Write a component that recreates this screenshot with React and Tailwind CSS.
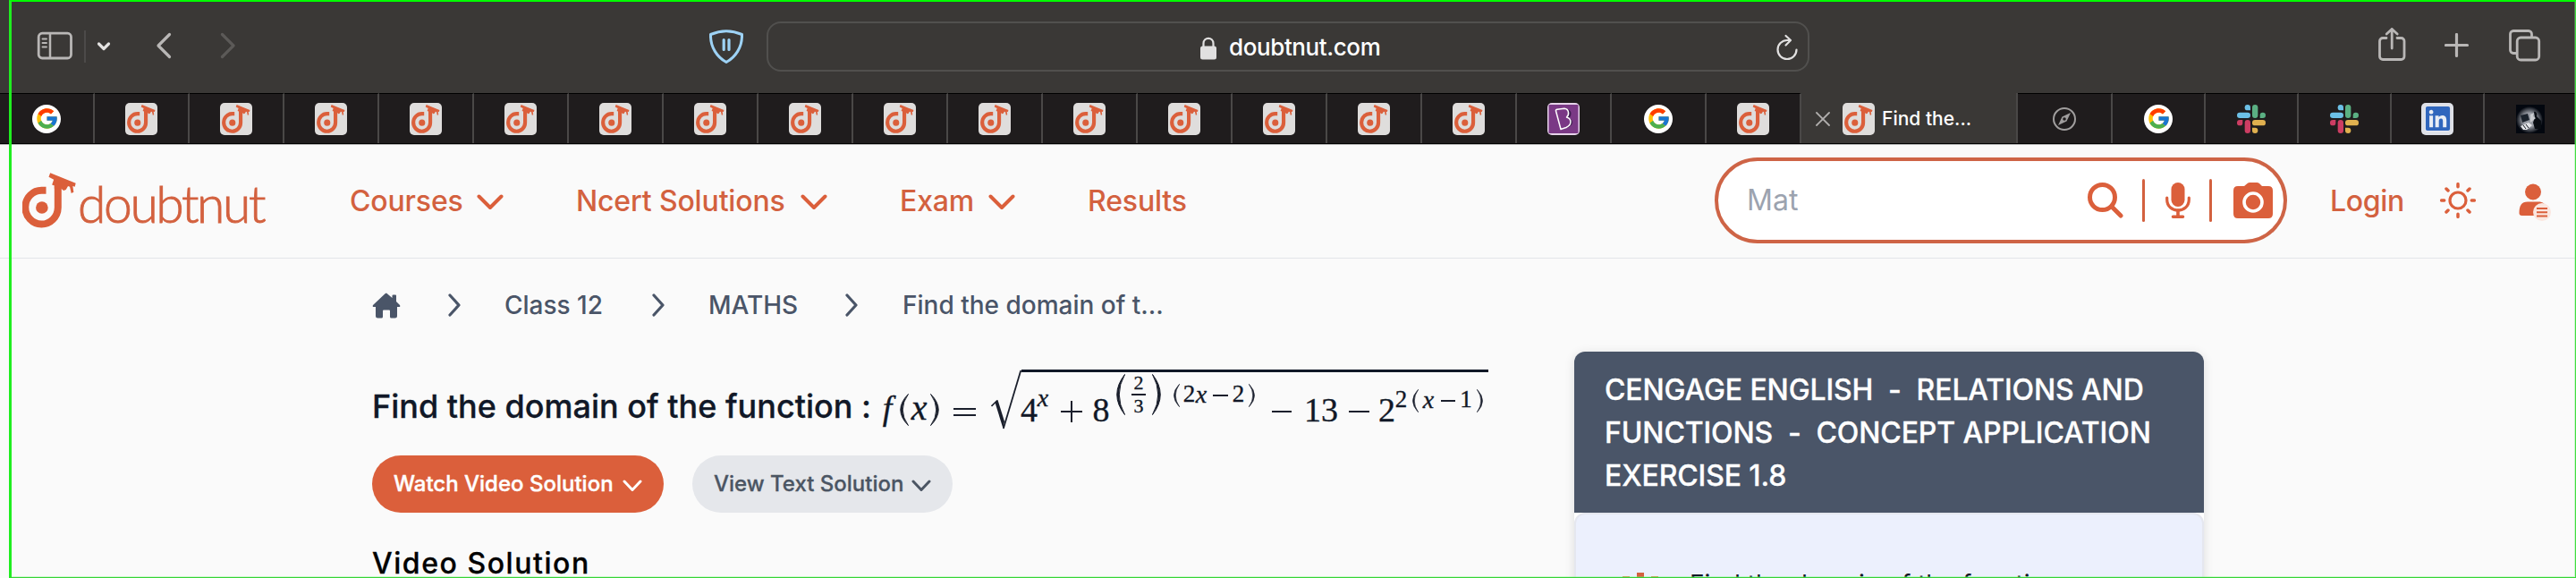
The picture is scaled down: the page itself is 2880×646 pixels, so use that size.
import React from "react";
import { FcGoogle } from "react-icons/fc";
import { FaLinkedin } from "react-icons/fa";

const ORANGE = "#db5f3b";

function NutMark({ className }) {
  return (
    <svg viewBox="75 577 181 186" className={className} fill="none">
      <path d="M155 636H141A55 57 0 1 0 195 694V622" stroke={ORANGE} strokeWidth="24" />
      <circle cx="141" cy="694" r="20.5" fill={ORANGE} />
      <path
        d="M169 577L255 612L252 624L245 622L248 642L240 646L235 624L229 622L222 634L214 637L206 630H183V620L175 617L181 600L164 591Z"
        fill={ORANGE}
      />
    </svg>
  );
}

function NutFavicon() {
  return (
    <span className="flex h-9 w-9 shrink-0 items-center justify-center rounded-[5px] bg-[#dfdddc]">
      <NutMark className="h-8 w-8" />
    </span>
  );
}

function GoogleFavicon() {
  return (
    <span className="flex h-8 w-8 items-center justify-center rounded-full bg-white">
      <FcGoogle className="h-[27px] w-[27px]" />
    </span>
  );
}

function SlackFavicon() {
  return (
    <svg viewBox="0 0 96 96" className="h-8 w-8">
      <g fill="#6cc0e6">
        <rect y="26" width="45" height="19" rx="9.5" />
        <path d="M45 19H35.500A9.500 9.500 0 1 1 45 9.500Z" />
      </g>
      <g fill="#5bb083">
        <rect x="51" width="19" height="45" rx="9.500" />
        <path d="M77 45V35.500A9.500 9.500 0 1 1 86.500 45Z" />
      </g>
      <g fill="#e0b04f">
        <rect x="51" y="51" width="45" height="19" rx="9.500" />
        <path d="M51 77H60.500A9.500 9.500 0 1 1 51 86.500Z" />
      </g>
      <g fill="#cd3d63">
        <rect x="26" y="51" width="19" height="45" rx="9.500" />
        <path d="M19 51V60.500A9.500 9.500 0 1 1 9.500 51Z" />
      </g>
    </svg>
  );
}

function PurpleFavicon() {
  return (
    <svg viewBox="0 0 36 36" className="h-9 w-9">
      <rect width="36" height="36" rx="5" fill="#e6d3ea" />
      <rect x="1.500" y="2" width="33" height="32" rx="1" fill="#7a3985" />
      <path d="M13 9L23 7C28 9 27 15 24 17C31 20 28 27 21 28L16 30Z" fill="#3c1d4e" />
      <path
        d="M9.500 9C9 8 10 7.500 11 7.200L19 6.200C24 6.500 25 13 21.500 16C28 18 27 25 21 27.500L15 29.500Z"
        fill="#7a3985"
        stroke="#fff"
        strokeWidth="1.500"
        strokeLinejoin="round"
      />
    </svg>
  );
}

function LinkedinFavicon() {
  return (
    <span className="flex h-9 w-9 items-center justify-center rounded-[5px] bg-[#dfe1e8]">
      <span className="flex h-7 w-7 items-center justify-center rounded-[3px] bg-[#e9edf5]">
        <FaLinkedin className="h-[31px] w-[31px] shrink-0 text-[#3066bd]" />
      </span>
    </span>
  );
}

function CompassFavicon() {
  return (
    <svg viewBox="0 0 26 26" className="h-[26px] w-[26px]" fill="none">
      <circle cx="13" cy="13" r="12" stroke="#a09e9e" strokeWidth="2" />
      <path d="M20 6L15.500 15.500L6 20L10.500 10.500Z" fill="#a09e9e" />
      <circle cx="13" cy="13" r="1.800" fill="#1f1c1d" />
    </svg>
  );
}

function PhotoFavicon() {
  return (
    <svg viewBox="0 0 32 32" className="h-8 w-8">
      <defs>
        <radialGradient id="glow">
          <stop offset="0.500" stopColor="#9a9ea6" />
          <stop offset="1" stopColor="#03070f" />
        </radialGradient>
      </defs>
      <rect width="32" height="32" fill="#03070f" />
      <ellipse cx="15" cy="17" rx="15" ry="15" fill="url(#glow)" />
      <path d="M5 12L13 10L15 17L7 20Z" fill="#1a222c" />
      <path d="M20 8C22 7 24 10 23 13L28 18V27H21L19 20L21 14Z" fill="#080c12" />
      <path d="M16 11L20 9L19 13L22 15L16 20Z" fill="#c9cbcf" />
      <path d="M5 24L14 20L18 23L12 28L8 28Z" fill="#e3e5e8" />
      <path d="M8 23L11 27M11 22L14 26" stroke="#11161d" />
    </svg>
  );
}

const favicons = {
  google: GoogleFavicon,
  nut: NutFavicon,
  slack: SlackFavicon,
  purple: PurpleFavicon,
  linkedin: LinkedinFavicon,
  compass: CompassFavicon,
  photo: PhotoFavicon,
};

const leftTabs = ["google", ...Array(15).fill("nut"), "purple", "google", "nut"];

function Tab({ kind, width, last }) {
  const Icon = favicons[kind];
  return (
    <div
      className={`flex h-full shrink-0 items-center justify-center border-t border-t-black bg-[#1f1c1d] ${width} ${
        last ? "" : "border-r-2 border-r-[#4a4847]"
      }`}
    >
      <Icon />
    </div>
  );
}

function Toolbar() {
  return (
    <div className="flex h-[104px] items-start bg-[#3a3836]">
      <svg viewBox="0 0 40 32" className="ml-[41px] mt-[35px] h-8 w-10 shrink-0" fill="none" stroke="#b9b7b6">
        <rect x="2.200" y="2.200" width="36.300" height="27.800" rx="4" strokeWidth="2.800" />
        <path d="M15 2V30" strokeWidth="2.500" />
        <path d="M6.500 8.500H11M6.500 13H11M6.500 17.500H11" strokeWidth="1.900" strokeLinecap="round" />
      </svg>
      <span className="ml-[13px] mt-[34px] h-9 w-0.5 bg-[#4c4a49]" />
      <svg viewBox="0 0 16 12" className="ml-3 mt-[46px] h-3 w-4" fill="none">
        <path d="M2.500 3L8 8.500L13.500 3" stroke="#e4e3e2" strokeWidth="3.200" strokeLinecap="round" strokeLinejoin="round" />
      </svg>
      <svg viewBox="0 0 18 30" className="ml-[50px] mt-9 h-[30px] w-[18px]" fill="none">
        <path d="M15.500 2.500L3 15L15.500 27.500" stroke="#b9b7b6" strokeWidth="3.200" strokeLinecap="round" strokeLinejoin="round" />
      </svg>
      <svg viewBox="0 0 18 30" className="ml-[54px] mt-9 h-[30px] w-[18px]" fill="none">
        <path d="M2.500 2.500L15 15L2.500 27.500" stroke="#5c5a58" strokeWidth="3.200" strokeLinecap="round" strokeLinejoin="round" />
      </svg>
      <svg viewBox="0 0 38 38" className="ml-[529px] mt-[33px] h-[38px] w-[38px]" fill="none" stroke="#9dd2f5">
        <path d="M1.500 5.500Q19 -2 36.500 5.500C37 20 29 31 19 36.500C9 31 1 20 1.500 5.500Z" strokeWidth="3" strokeLinejoin="round" />
        <path d="M16.200 11.500V22.500M22 11.500V22.500" strokeWidth="3.200" strokeLinecap="round" />
      </svg>
      <div className="ml-[26px] mt-6 flex h-14 w-[1166px] items-start rounded-2xl border-2 border-[#51504e] text-[#e1e0e0]">
        <svg viewBox="0 0 18 26" className="ml-[483px] mt-[15px] h-[26px] w-[18px]" fill="none">
          <rect y="10.500" width="18" height="15" rx="2.500" fill="#e1e0e0" />
          <path d="M3.500 12V7.500C3.500 0 14.500 0 14.500 7.500V12" stroke="#e1e0e0" strokeWidth="2.200" />
        </svg>
        <span className="ml-[14px] mt-[10px] w-[181px] text-[26px] leading-[34px] font-medium tracking-[-0.4px] whitespace-nowrap text-white">
          doubtnut.com
        </span>
        <svg viewBox="0 0 26 30" className="ml-[430px] mt-3 h-[30px] w-[26px]" fill="none" stroke="#e1e0e0" strokeWidth="2.200" strokeLinecap="round" strokeLinejoin="round">
          <path d="M15.500 7H13A10.500 10.500 0 1 0 23.500 17.500" />
          <path d="M11.500 2L17 7L11.500 12.500" />
        </svg>
      </div>
      <svg viewBox="0 0 32 40" className="ml-[635px] mt-[30px] h-10 w-8" fill="none" stroke="#b9b7b6" strokeWidth="2.800" strokeLinecap="round" strokeLinejoin="round">
        <path d="M10 12.500H6A3.500 3.500 0 0 0 2.500 16V33A3.500 3.500 0 0 0 6 36.500H26.500A3.500 3.500 0 0 0 30 33V16A3.500 3.500 0 0 0 26.500 12.500H22" />
        <path d="M16.200 24V2.500M10.200 8L16.200 2.500L22.200 8" />
      </svg>
      <svg viewBox="0 0 28 28" className="ml-[43px] mt-[37px] h-7 w-7" fill="none">
        <path d="M13.500 1.500V25.500M1.500 13.500H25.500" stroke="#b9b7b6" strokeWidth="3.200" strokeLinecap="round" />
      </svg>
      <svg viewBox="0 0 36 36" className="ml-11 mt-[33px] h-9 w-9" fill="none" stroke="#b9b7b6" strokeWidth="2.800">
        <path d="M9 26.500H5A3.600 3.600 0 0 1 1.500 23V5A3.600 3.600 0 0 1 5 1.500H22A3.600 3.600 0 0 1 25.500 5V9" />
        <rect x="9.200" y="9" width="24.500" height="25" rx="4" />
      </svg>
    </div>
  );
}

function TabBar() {
  return (
    <div className="flex h-[58px] border-b border-b-[#b5b5b5]">
      <div className="flex h-[57px] w-full border-b border-b-black bg-[#3a3836]">
        {leftTabs.map((k, i) => (
          <Tab key={i} kind={k} width="w-[106px]" />
        ))}
        <div className="flex w-[242px] shrink-0 items-center border-r-2 border-r-[#4a4847] pt-px">
          <svg viewBox="0 0 16 16" className="ml-4 h-4 w-4" fill="none">
            <path d="M1 1L15 15M15 1L1 15" stroke="#b0aead" strokeWidth="1.800" strokeLinecap="round" />
          </svg>
          <span className="ml-3.5">
            <NutFavicon />
          </span>
          <span className="ml-2 text-[21px] font-medium text-white">Find the...</span>
        </div>
        <Tab kind="compass" width="w-[106px]" />
        <Tab kind="google" width="w-[104px]" />
        <Tab kind="slack" width="w-[104px]" />
        <Tab kind="slack" width="w-[104px]" />
        <Tab kind="linkedin" width="w-[104px]" />
        <Tab kind="photo" width="w-[102px]" last />
      </div>
    </div>
  );
}

function NavItem({ label, width, plain }) {
  return (
    <div className={`flex shrink-0 items-center justify-between whitespace-nowrap ${width}`}>
      <span>{label}</span>
      {!plain && (
        <svg viewBox="0 0 30 18" className="mt-0.5 h-[18px] w-[30px]" fill="none">
          <path d="M2.500 2.500L15 15L27.500 2.500" stroke={ORANGE} strokeWidth="4" strokeLinecap="round" strokeLinejoin="round" />
        </svg>
      )}
    </div>
  );
}

function Header() {
  return (
    <header className="flex h-[127px] items-center border-b border-[#e3e4e9] text-[32px] font-medium text-[#d3613f]">
      <NutMark className="ml-[25px] mb-[3px] h-[62px] w-[60px] shrink-0" />
      <span className="ml-[2px] mt-1 w-[216px] shrink-0 font-[Lato] text-[57px] leading-[60px] font-light tracking-[-2.4px] [-webkit-text-stroke:0.9px_#d3613f]">
        doubtnut
      </span>
      <nav className="ml-[88px] flex tracking-[-0.15px]">
        <NavItem label="Courses" width="w-[172px]" />
        <span className="w-[81px]" />
        <NavItem label="Ncert Solutions" width="w-[281px]" />
        <span className="w-[81px]" />
        <NavItem label="Exam" width="w-[129px]" />
        <span className="w-[81px]" />
        <NavItem label="Results" width="w-[111px]" plain />
      </nav>
      <div className="mb-0.5 ml-[590px] flex h-24 w-[640px] shrink-0 items-center rounded-full border-4 border-[#ce6446] bg-white">
        <span className="ml-8 w-[381px] font-normal text-[#9ca3af]">Mat</span>
        <svg viewBox="0 0 40 40" className="h-10 w-10" fill="none" stroke={ORANGE} strokeLinecap="round">
          <circle cx="16.500" cy="16.500" r="14" strokeWidth="5" />
          <path d="M27 27L37 37" strokeWidth="5" />
        </svg>
        <span className="ml-[21px] h-12 w-[3px] rounded bg-[#d3613f]" />
        <svg viewBox="0 0 28 40" className="ml-[23px] h-10 w-7" fill="none" stroke={ORANGE} strokeLinecap="round">
          <rect x="6.500" width="15" height="27" rx="7.500" fill={ORANGE} stroke="none" />
          <path d="M1.700 17V19C1.700 35 26.300 35 26.300 19V17" strokeWidth="3.200" />
          <path d="M14 31V38M8.500 38.200H19.500" strokeWidth="3.600" />
        </svg>
        <span className="ml-[21px] h-12 w-[3px] rounded bg-[#d3613f]" />
        <svg viewBox="0 0 44 40" className="ml-6 h-10 w-11" fill="none">
          <path
            d="M15 1.500Q16 0 18 0H26.500Q28.500 0 29.500 1.500L32 4H39Q44 4 44 9V35Q44 40 39 40H5Q0 40 0 35V9Q0 4 5 4H12Z"
            fill={ORANGE}
          />
          <circle cx="22" cy="22" r="10" stroke="#fff" strokeWidth="3.600" />
        </svg>
      </div>
      <span className="ml-[48px] w-[83px] tracking-[-0.3px]">Login</span>
      <svg viewBox="0 0 40 40" className="mb-0.5 ml-10 h-10 w-10 shrink-0" fill="none" stroke={ORANGE} strokeWidth="3.200" strokeLinecap="round">
        <circle cx="20" cy="20" r="9" />
        <path d="M20 1.700V4.700M20 35.300V38.300M1.700 20H4.700M35.300 20H38.300M7 7L9 9M31 31L33 33M7 33L9 31M31 9L33 7" strokeWidth="3.500" />
      </svg>
      <svg viewBox="0 0 36 42" className="ml-12 mt-0.5 h-[42px] w-9 shrink-0" fill="none">
        <circle cx="16" cy="9.500" r="9" fill={ORANGE} />
        <path d="M0.500 33C0.500 25 3 20.500 10 20.500H22C27 20.500 30 23 31 28L26 36H3.500Q0.500 36 0.500 33Z" fill={ORANGE} />
        <circle cx="26" cy="32" r="10" fill="#fbe6df" />
        <path d="M20 28H32M20 32.200H32M20 36.400H32" stroke={ORANGE} strokeWidth="2" />
      </svg>
    </header>
  );
}

function Crumb() {
  return (
    <svg viewBox="0 0 16 26" className="h-[26px] w-4 shrink-0" fill="none">
      <path d="M3 2L13 13L3 24" stroke="#4a5568" strokeWidth="3.200" strokeLinecap="round" strokeLinejoin="round" />
    </svg>
  );
}

function Breadcrumbs() {
  return (
    <div className="mt-[32px] flex h-10 items-center text-[28px] font-medium whitespace-nowrap text-[#4a5568]">
      <svg viewBox="0 0 32 29" className="h-[29px] w-8 shrink-0" fill="#4a5568">
        <path d="M16 0.500L22.500 6V3.500Q22.500 2.500 23.500 2.500H26Q27 2.500 27 3.500V10L31 14Q32 16 30 16H28V26Q28 28.500 25.500 28.500H21.500Q20 28.500 20 27V20.500Q20 19.500 19 19.500H13Q12 19.500 12 20.500V27Q12 28.500 10.500 28.500H6.500Q4 28.500 4 26V16H2Q0 16 1 14L14.500 1.200Z" />
      </svg>
      <span className="ml-[52px]"><Crumb /></span>
      <span className="ml-[48px] w-[114px]">Class 12</span>
      <span className="ml-[50px]"><Crumb /></span>
      <span className="ml-[48px] w-[102px]">MATHS</span>
      <span className="ml-[50px]"><Crumb /></span>
      <span className="ml-[49px]">Find the domain of t...</span>
    </div>
  );
}

function M({ className, children }) {
  return <span className={`flex shrink-0 justify-center leading-none ${className}`}>{children}</span>;
}

function Minus({ className }) {
  return <span className={`h-[2px] shrink-0 bg-[#1a1f2c] ${className}`} />;
}

function Paren({ right, className }) {
  return (
    <svg viewBox="0 0 10 46" preserveAspectRatio="none" className={`shrink-0 ${className}`}>
      <path
        d={right ? "M0.500 0.500Q18 23 0.500 45.500Q13 23 0.500 0.500Z" : "M9.500 0.500Q-8 23 9.500 45.500Q-3 23 9.500 0.500Z"}
        fill="#1a1f2c"
        stroke="#1a1f2c"
        strokeWidth="1"
      />
    </svg>
  );
}

function Formula() {
  return (
    <div className="flex h-[70px] items-start font-['Liberation_Serif'] text-[38px] text-[#111827] [-webkit-text-stroke:0.35px_#111827]">
      <M className="mt-[27px] w-[20px] italic">f</M>
      <Paren className="ml-[4px] mt-[30px] h-9 w-[10px]" />
      <M className="ml-[3px] mt-[26px] w-[17px] text-[40px] italic">x</M>
      <Paren right className="ml-1 mt-[30px] h-9 w-[10px]" />
      <span className="ml-4 mt-[46px] h-[9px] w-[25px] shrink-0 border-y-2 border-[#1a1f2c]" />
      <svg viewBox="0 0 34 68" className="ml-[17px] mt-[3px] h-[68px] w-[34px] shrink-0" fill="none">
        <path d="M0.500 41L7 34.500" stroke="#1a1f2c" strokeWidth="1.600" />
        <path d="M4.500 37L7.500 34L15 58L13.500 66Z" fill="#1a1f2c" />
        <path d="M13.800 66L33.300 1" stroke="#1a1f2c" strokeWidth="1.800" />
      </svg>
      <div className="mt-[3px] flex w-[522px] shrink-0 items-start border-t-[3px] border-[#111827]">
        <M className="mt-[23px] w-[17px]">4</M>
        <M className="mt-[15px] w-[14px] text-[28px] italic">x</M>
        <svg viewBox="0 0 24 24" className="ml-[13px] mt-[32px] h-6 w-6 shrink-0">
          <path d="M12 0V24M0 12H24" stroke="#1a1f2c" strokeWidth="2" />
        </svg>
        <M className="ml-3 mt-[23px] w-[18px]">8</M>
        <Paren className="ml-2 mt-[2px] h-[46px] w-[10px]" />
        <div className="ml-[7px] mt-[1px] flex w-4 shrink-0 flex-col items-center text-[22px]">
          <span className="h-[23px] leading-[22px]">2</span>
          <span className="h-[2px] w-4 bg-[#1a1f2c]" />
          <span className="leading-[24px]">3</span>
        </div>
        <Paren right className="ml-[7px] mt-[2px] h-[46px] w-[10px]" />
        <Paren className="ml-[14px] mt-[13px] h-[26px] w-[7px]" />
        <M className="ml-1 mt-[11px] w-[13px] text-[27px]">2</M>
        <M className="mt-[11px] w-[14px] text-[28px] italic">x</M>
        <Minus className="ml-[6px] mt-[25px] w-[17px]" />
        <M className="ml-[5px] mt-[11px] w-[13px] text-[27px]">2</M>
        <Paren right className="ml-[5px] mt-[13px] h-[26px] w-[7px]" />
        <Minus className="ml-[19px] mt-[43px] w-[22px]" />
        <M className="ml-[14px] mt-[23px] w-[38px]">13</M>
        <Minus className="ml-[12px] mt-[43px] w-[23px]" />
        <M className="ml-[10px] mt-[23px] w-[19px]">2</M>
        <M className="mt-[17px] w-[13px] text-[27px]">2</M>
        <Paren className="ml-[6px] mt-[19px] h-[26px] w-[7px]" />
        <M className="ml-[4px] mt-[17px] w-[14px] text-[28px] italic">x</M>
        <Minus className="ml-[7px] mt-[31px] w-[16px]" />
        <M className="ml-[5px] mt-[17px] w-[14px] text-[27px]">1</M>
        <Paren right className="ml-[5px] mt-[19px] h-[26px] w-[7px]" />
      </div>
    </div>
  );
}

function PillChevron() {
  return (
    <svg viewBox="0 0 22 14" className="mt-1 h-[14px] w-[22px]" fill="none">
      <path d="M2 2L11 11.500L20 2" stroke="currentColor" strokeWidth="3" strokeLinecap="round" strokeLinejoin="round" />
    </svg>
  );
}

export default function App() {
  return (
    <div className="relative h-[646px] w-[2880px] overflow-hidden bg-[#fafafa] font-[Inter,sans-serif]">
      <Toolbar />
      <TabBar />
      <Header />
      <main className="flex items-start">
        <section className="ml-[416px] w-[1344px] shrink-0">
          <Breadcrumbs />
          <div className="mt-[49px] flex h-[70px] items-start whitespace-nowrap">
            <h1 className="mt-[19px] w-[566px] shrink-0 text-[36px] leading-[50px] font-medium text-[#111827] [-webkit-text-stroke:0.3px_#111827]">
              Find the domain of the function :
            </h1>
            <Formula />
          </div>
          <div className="mt-[29px] flex gap-8 text-2xl font-medium whitespace-nowrap">
            <button className="flex h-16 w-[326px] items-center justify-between rounded-full bg-[#db5f3b] px-6 text-white [-webkit-text-stroke:0.4px_#ffffff]">
              Watch Video Solution <PillChevron />
            </button>
            <button className="flex h-16 w-[291px] items-center justify-between rounded-full bg-[#e5e7eb] px-6 text-[#4b5563] [-webkit-text-stroke:0.3px_#4b5563]">
              View Text Solution <PillChevron />
            </button>
          </div>
          <h2 className="mt-[33px] text-[32px] leading-[48px] font-medium tracking-[1.55px] text-black [-webkit-text-stroke:0.3px_#000000]">
            Video Solution
          </h2>
        </section>
        <aside className="mt-[104px] w-[704px] shrink-0 rounded-xl bg-white shadow-[0_2px_12px_rgba(0,0,0,0.12)]">
          <div className="h-[180px] rounded-t-xl bg-[#4a5568] pt-[19px] pr-9 pl-[34px] text-[32px] leading-[48px] font-medium tracking-[-0.12px] whitespace-pre text-white [-webkit-text-stroke:0.3px_#ffffff]">
            {"CENGAGE ENGLISH  -  RELATIONS AND\nFUNCTIONS  -  CONCEPT APPLICATION\nEXERCISE 1.8"}
          </div>
          <div className="flex h-[200px] items-start rounded-xl border-2 border-[#e5e7ef] bg-[#ecf0fd]">
            <svg viewBox="0 0 40 40" className="ml-[52px] mt-[65px] h-10 w-10 shrink-0">
              <path d="M0 4H8V40H0ZM32 4H40V40H32Z" fill="#d9874f" />
              <path d="M16 0H24V40H16Z" fill="#d3613f" />
            </svg>
            <span className="ml-[35px] mt-[57px] text-[28px] leading-[42px] whitespace-nowrap text-[#111827]">
              Find the domain of the function
            </span>
          </div>
        </aside>
      </main>
      <div className="pointer-events-none absolute top-0 right-0 bottom-0 left-2.5 border-t-2 border-r border-b border-l-[3px] border-t-[#00ff00] border-r-[#3fdc3f] border-b-[#35d435] border-l-[#1fee1f] shadow-[inset_-1px_-1px_0_rgba(120,240,120,0.35)]" />
    </div>
  );
}
